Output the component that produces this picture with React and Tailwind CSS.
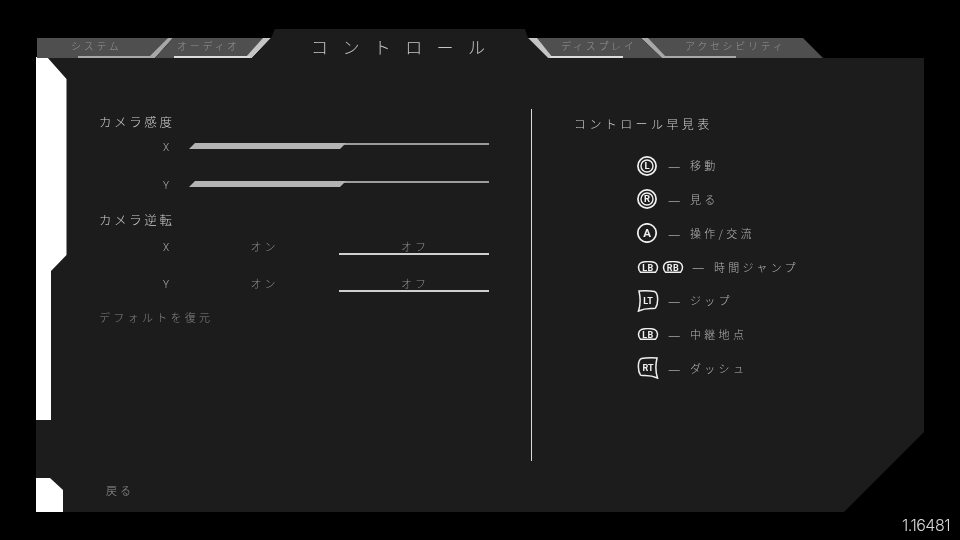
import React from 'react'

const jp = "font-['Noto_Sans_CJK_JP','Liberation_Sans',sans-serif]"

function Tab({ label, outer, text, slash, stripe }) {
  return (
    <div className={`relative h-[20px] shrink-0 ${outer}`}>
      <span className={`block text-[10px] leading-[15px] tracking-[2.7px] text-[#949494] will-change-transform ${text}`}>{label}</span>
      <div className={`absolute inset-0 ${slash}`} />
      <div className={`absolute bottom-0 h-[2px] ${stripe}`} />
    </div>
  )
}

function Slider({ label }) {
  return (
    <div className="flex h-[20px] items-start">
      <span className="w-[90px] pl-[64px] text-[10px] leading-[22px] text-[#b0b0b0] font-['Roboto',sans-serif]">{label}</span>
      <div className="relative mt-[6px] h-[6px] w-[300px]">
        <div className="ml-[150px] h-[2px] w-[150px] bg-[#9c9c9c]" />
        <div className="absolute left-0 top-0 h-[6px] w-[157px] bg-[#b4b4b4] [clip-path:polygon(6px_0,157px_0,151px_6px,0_6px)]" />
      </div>
    </div>
  )
}

function Toggle({ label }) {
  return (
    <div className="flex h-[20px] items-start">
      <span className="w-[90px] pl-[64px] text-[10px] leading-[22px] text-[#b0b0b0] font-['Roboto',sans-serif]">{label}</span>
      <span className="w-[150px] pl-[1px] text-center text-[11px] leading-[18px] tracking-[3px] text-[#8c8c8c]">オン</span>
      <span className="h-[18px] w-[150px] border-b-2 border-[#cfcfcf] pl-[2px] text-center text-[11px] leading-[18px] tracking-[3px] text-[#8c8c8c]">オフ</span>
    </div>
  )
}

function Stick({ letter }) {
  return (
    <svg width="20" height="20" viewBox="0 0 20 20" fill="none" stroke="#f0f0f0">
      <circle cx="10" cy="10" r="9.1" strokeWidth="1.7" />
      <circle cx="10" cy="10" r="6" strokeWidth="1.4" />
      <text x="10" y="13.2" textAnchor="middle" fontSize="9.5" fontWeight="700" fontFamily="Roboto, sans-serif" fill="#f0f0f0" stroke="none">{letter}</text>
    </svg>
  )
}

function FaceA() {
  return (
    <svg width="20" height="20" viewBox="0 0 20 20" fill="none" stroke="#f0f0f0">
      <circle cx="10" cy="10" r="9.2" strokeWidth="1.7" />
      <text x="10" y="14" textAnchor="middle" fontSize="11.5" fontWeight="700" fontFamily="Roboto, sans-serif" fill="#f0f0f0" stroke="none">A</text>
    </svg>
  )
}

function Bumper({ letter }) {
  return (
    <svg width="22" height="12" viewBox="0 0 22 12" fill="none" stroke="#f0f0f0" strokeWidth="1.5">
      <path d="M3.5 11.2C0.5 8 1 3 4.5 1.4C8.5 0.4 13.5 0.4 17.5 1.4C21 3 21.5 8 18.5 11.2Z" />
      <text x="11" y="9.6" textAnchor="middle" fontSize="9" fontWeight="700" fontFamily="Roboto, sans-serif" letterSpacing="0.5" fill="#f0f0f0" stroke="none">{letter}</text>
    </svg>
  )
}

function Trigger({ letter, flip }) {
  return (
    <svg width="22" height="22" viewBox="0 0 22 22" fill="none" stroke="#f0f0f0" strokeWidth="1.5">
      <path
        d={flip
          ? 'M20 1Q10 0.5 4.5 1.5C0.5 3 0.5 14 3.5 18C4.5 19 6 18.5 8 18.5Q15 18.5 20.5 21Q17.5 12 20 1Z'
          : 'M2 1Q12 0.5 17.5 1.5C21.5 3 21.5 14 18.5 18C17.5 19 16 18.5 14 18.5Q7 18.5 1.5 21Q4.5 12 2 1Z'}
      />
      <text x="11" y="13.5" textAnchor="middle" fontSize="9" fontWeight="700" fontFamily="Roboto, sans-serif" fill="#f0f0f0" stroke="none">{letter}</text>
    </svg>
  )
}

function Legend({ icon, label, dashGap = 'ml-[11px]' }) {
  return (
    <div className="flex h-[20px] items-center pl-[63px]">
      {icon}
      <span className={`${dashGap} w-[22px] text-[14px] text-[#c0c0c0]`}>—</span>
      <span className="text-[11px] tracking-[3.3px] text-[#b4b4b4]">{label}</span>
    </div>
  )
}

export default function App() {
  return (
    <div className={`flex h-[540px] w-[960px] flex-col overflow-hidden bg-black pt-[29px] font-light ${jp}`}>
      {/* タブ */}
      <div className="relative z-10 flex h-[29px] items-end pl-[37px]">
        <Tab
          label="システム"
          outer="w-[136px] bg-[#4f4f4f] [clip-path:polygon(0_0,136px_0,118px_20px,0_20px)]"
          text="pl-[34px]"
          slash="bg-[#a8a8a8] [clip-path:polygon(131px_0,136px_0,118px_20px,111px_20px)]"
          stripe="left-[41px] w-[74px] bg-[#a8a8a8]"
        />
        <Tab
          label="オーディオ"
          outer="ml-[-18px] w-[116px] bg-[#4f4f4f] [clip-path:polygon(18px_0,116px_0,97px_20px,0_20px)]"
          text="pl-[22px]"
          slash="bg-[#c4c4c4] [clip-path:polygon(108px_0,116px_0,97px_20px,90px_20px)]"
          stripe="left-[19px] w-[76px] bg-[#dcdcdc]"
        />
        <div className="ml-[-19px] h-[29px] w-[296px] shrink-0 bg-[#1c1c1c] [clip-path:polygon(23px_0,273px_0,276px_9px,296px_29px,0_29px,19px_9px)]">
          <span className="block pl-[59px] text-[17px] leading-[35px] tracking-[14.4px] text-[#c4c4c4] will-change-transform">コントロール</span>
        </div>
        <Tab
          label="ディスプレイ"
          outer="ml-[-20px] w-[134px] bg-[#4f4f4f] [clip-path:polygon(0_0,113px_0,134px_20px,20px_20px)]"
          text="pl-[33px]"
          slash="bg-[#c4c4c4] [clip-path:polygon(0_0,9px_0,25px_20px,20px_20px)]"
          stripe="left-[22px] w-[73px] bg-[#dcdcdc]"
        />
        <Tab
          label="アクセシビリティ"
          outer="ml-[-21px] w-[182px] bg-[#4f4f4f] [clip-path:polygon(0_0,162px_0,182px_20px,21px_20px)]"
          text="pl-[44px]"
          slash="bg-[#a8a8a8] [clip-path:polygon(0_0,7px_0,26px_20px,21px_20px)]"
          stripe="left-[21px] w-[74px] bg-[#a8a8a8]"
        />
      </div>

      {/* メインパネル */}
      <div className="ml-[36px] flex h-[454px] w-[888px] bg-[#1c1c1c] [clip-path:polygon(0_-1px,31px_-1px,31px_0,888px_0,888px_374px,808px_454px,0_454px)]">
        <div className="flex w-[31px] shrink-0 flex-col">
          <div className="mt-[-1px] h-[363px] bg-white [clip-path:polygon(0_0,11px_0,30.5px_22px,30.5px_198px,15px_214px,15px_363px,0_363px)]" />
          <div className="mt-[58px] h-[34px] w-[27px] bg-white [clip-path:polygon(0_0,14px_0,27px_12px,27px_34px,0_34px)]" />
        </div>

        <div className="flex min-w-0 flex-1 flex-col will-change-transform">
          <div className="flex h-[403px]">
            {/* 左列 */}
            <div className="w-[464px] shrink-0 pl-[32px] pt-[54px]">
              <div className="text-[12.5px] leading-[20px] tracking-[2.6px] text-[#d0d0d0]">カメラ感度</div>
              <div className="mt-[5px]"><Slider label="X" /></div>
              <div className="mt-[18px]"><Slider label="Y" /></div>
              <div className="mt-[15px] text-[12.5px] leading-[20px] tracking-[2.6px] text-[#d0d0d0]">カメラ逆転</div>
              <div className="mt-[7px]"><Toggle label="X" /></div>
              <div className="mt-[17px]"><Toggle label="Y" /></div>
              <div className="mt-[13px] text-[11px] leading-[20px] tracking-[3.3px] text-[#868686]">デフォルトを復元</div>
            </div>

            <div className="mt-[51px] h-[352px] w-px shrink-0 bg-[#d8d8d8]" />

            {/* 右列 */}
            <div className="flex-1 pl-[42px] pt-[56px]">
              <div className="text-[12px] leading-[20px] tracking-[3.4px] text-[#d0d0d0]">コントロール早見表</div>
              <div className="mt-[21.5px] flex flex-col gap-[13.8px]">
                <Legend icon={<Stick letter="L" />} label="移動" />
                <Legend icon={<Stick letter="R" />} label="見る" />
                <Legend icon={<FaceA />} label="操作/交流" />
                <Legend
                  icon={<div className="flex gap-[3px]"><Bumper letter="LB" /><Bumper letter="RB" /></div>}
                  label="時間ジャンプ"
                  dashGap="ml-[8px]"
                />
                <Legend icon={<Trigger letter="LT" />} label="ジップ" dashGap="ml-[9px]" />
                <Legend icon={<Bumper letter="LB" />} label="中継地点" dashGap="ml-[9px]" />
                <Legend icon={<Trigger letter="RT" flip />} label="ダッシュ" dashGap="ml-[9px]" />
              </div>
            </div>
          </div>

          <div className="pl-[39px] pt-[19px] text-[11px] leading-[20px] tracking-[3px] text-[#969696]">戻る</div>
        </div>
      </div>

      <div className="flex flex-1 items-center justify-end pb-[3px] pr-[10px] text-[16px] font-['Inter',sans-serif] font-light tracking-[-0.5px] text-[#d8d8d8] will-change-transform">
        1.16481
      </div>
    </div>
  )
}
